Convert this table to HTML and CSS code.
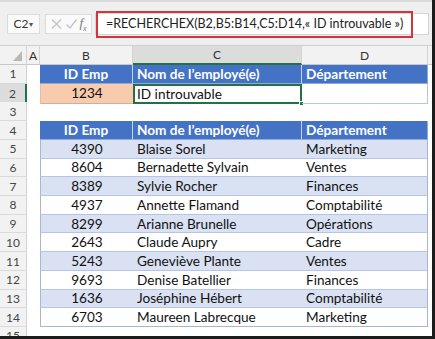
FILE: index.html
```html
<!DOCTYPE html>
<html lang="fr">
<head>
<meta charset="utf-8">
<link rel="stylesheet" href="styles.css">
</head>
<body>
<div class="frame">
  <div class="fbar">
    <div class="namebox"><span>C2</span><span class="caret">▾</span></div>
    <div class="sep">⋮</div>
    <div class="fxbox">
      <svg width="14" height="12" viewBox="0 0 14 12"><path d="M2 1.5 L11 10.5 M11 1.5 L2 10.5" stroke="#c4c4c4" stroke-width="1.4" fill="none"/></svg>
      <svg width="13" height="12" viewBox="0 0 13 12"><path d="M1.5 6.5 L5 10 L11.5 1.5" stroke="#c4c4c4" stroke-width="1.4" fill="none"/></svg>
      <span class="fx">f<sub>x</sub></span>
    </div>
    <div class="finput">
      <span class="ftext">=RECHERCHEX(B2,B5:B14,C5:D14,« ID introuvable »)</span>
      <div class="redbox"></div>
    </div>
  </div>
  <div class="sheet">
    <div class="row colhead">
      <div class="corner"><span class="tri"></span></div>
      <div class="ch">A</div>
      <div class="ch">B</div>
      <div class="ch ch-sel">C</div>
      <div class="ch">D</div>
      <div class="ch ch-last"></div>
    </div>

    <div class="row">
      <div class="rh">1</div><div class="c"></div>
      <div class="c hdr num">ID Emp</div>
      <div class="c hdr">Nom de l’employé(e)</div>
      <div class="c hdr hdr-end">Département</div><div class="c"></div>
    </div>
    <div class="row">
      <div class="rh rh-sel">2</div><div class="c"></div>
      <div class="c lookup num">1234</div>
      <div class="c selected">ID introuvable<span class="handle"></span></div>
      <div class="c result"></div><div class="c"></div>
    </div>
    <div class="row">
      <div class="rh">3</div><div class="c"></div><div class="c"></div><div class="c"></div><div class="c"></div><div class="c"></div>
    </div>
    <div class="row">
      <div class="rh">4</div><div class="c"></div>
      <div class="c hdr num">ID Emp</div>
      <div class="c hdr">Nom de l’employé(e)</div>
      <div class="c hdr hdr-end">Département</div><div class="c"></div>
    </div>
    <div class="row band">
      <div class="rh">5</div><div class="c"></div>
      <div class="c t tl num">4390</div><div class="c t">Blaise Sorel</div><div class="c t tr">Marketing</div><div class="c"></div>
    </div>
    <div class="row">
      <div class="rh">6</div><div class="c"></div>
      <div class="c t tl num">8604</div><div class="c t">Bernadette Sylvain</div><div class="c t tr">Ventes</div><div class="c"></div>
    </div>
    <div class="row band">
      <div class="rh">7</div><div class="c"></div>
      <div class="c t tl num">8389</div><div class="c t">Sylvie Rocher</div><div class="c t tr">Finances</div><div class="c"></div>
    </div>
    <div class="row">
      <div class="rh">8</div><div class="c"></div>
      <div class="c t tl num">4937</div><div class="c t">Annette Flamand</div><div class="c t tr">Comptabilité</div><div class="c"></div>
    </div>
    <div class="row band">
      <div class="rh">9</div><div class="c"></div>
      <div class="c t tl num">8299</div><div class="c t">Arianne Brunelle</div><div class="c t tr">Opérations</div><div class="c"></div>
    </div>
    <div class="row">
      <div class="rh">10</div><div class="c"></div>
      <div class="c t tl num">2643</div><div class="c t">Claude Aupry</div><div class="c t tr">Cadre</div><div class="c"></div>
    </div>
    <div class="row band">
      <div class="rh">11</div><div class="c"></div>
      <div class="c t tl num">5243</div><div class="c t">Geneviève Plante</div><div class="c t tr">Ventes</div><div class="c"></div>
    </div>
    <div class="row">
      <div class="rh">12</div><div class="c"></div>
      <div class="c t tl num">9693</div><div class="c t">Denise Batellier</div><div class="c t tr">Finances</div><div class="c"></div>
    </div>
    <div class="row band">
      <div class="rh">13</div><div class="c"></div>
      <div class="c t tl num">1636</div><div class="c t">Joséphine Hébert</div><div class="c t tr">Comptabilité</div><div class="c"></div>
    </div>
    <div class="row last">
      <div class="rh">14</div><div class="c"></div>
      <div class="c t tl num">6703</div><div class="c t">Maureen Labrecque</div><div class="c t tr">Marketing</div><div class="c"></div>
    </div>
    <div class="row partial">
      <div class="rh">15</div><div class="c"></div><div class="c"></div><div class="c"></div><div class="c"></div><div class="c"></div>
    </div>
  </div>
</div>
</body>
</html>
```

FILE: styles.css
```css
* { box-sizing: border-box; }
body { margin: 0; background: #fff; }
.frame {
  width: 435px; height: 339px;
  border-right: 3px solid #1c1c1c;
  border-bottom: 3px solid #1c1c1c;
  overflow: hidden;
  background: #fff;
  font-family: Lato, "Open Sans", sans-serif;
}
.fbar {
  height: 46px;
  background: #efefef;
  border-top: 2px solid #dadada;
  border-bottom: 1px solid #cfcfcf;
  display: flex;
  align-items: center;
  padding-left: 7px;
}
.namebox {
  width: 33px; height: 20px;
  background: #fafafa;
  border: 1px solid #dcdcdc;
  display: flex; align-items: center; justify-content: center; gap: 1px;
  font-size: 12px; color: #333;
}
.caret { font-size: 8px; color: #555; }
.sep { width: 5px; color: #b0b0b0; font-size: 11px; text-align: center; }
.fxbox {
  width: 47px; height: 20px;
  background: #fafafa;
  border: 1px solid #dcdcdc;
  display: flex; align-items: center; justify-content: center; gap: 1px;
  margin-right: 3px;
}
.fx { font-family: "Liberation Serif", serif; font-style: italic; font-size: 13px; color: #777; }
.fx sub { font-size: 8px; }
.finput {
  position: relative;
  width: 334px; height: 22px;
  background: #fff;
  border: 1px solid #d6d6d6;
  display: flex; align-items: center;
  padding-left: 10px;
}
.ftext { font-size: 12.5px; color: #222; white-space: nowrap; }
.redbox {
  position: absolute;
  left: 0; top: -3px;
  width: 317px; height: 27px;
  border: 2px solid #d7333d;
}
.sheet { font-size: 13.6px; }
.row {
  display: grid;
  grid-template-columns: 27px 13px 93px 169px 126px 4px;
  height: 18.72px;
}
.colhead { height: 19px; background: #f2f2f2; }
.corner {
  position: relative;
  border-right: 1px solid #d4d4d4;
  border-bottom: 1px solid #c8c8c8;
}
.tri {
  position: absolute; right: 4px; bottom: 3px;
  width: 0; height: 0;
  border-left: 9px solid transparent;
  border-bottom: 10px solid #b9b9b9;
}
.ch {
  border-right: 1px solid #d4d4d4;
  border-bottom: 1px solid #c8c8c8;
  display: flex; align-items: center; justify-content: center;
  font-size: 12px; color: #333;
}
.ch-sel { background: #dcdcdc; border-bottom: 2px solid #217346; }
.ch-last { border-right: none; }
.rh {
  background: #f2f2f2;
  border-right: 1px solid #d2d2d2;
  border-bottom: 1px solid #dadada;
  display: flex; align-items: center; justify-content: center;
  font-size: 12px; color: #444;
}
.rh-sel { background: #dcdcdc; border-right: 2px solid #217346; }
.c {
  display: flex; align-items: center;
  padding-left: 4px;
  color: #111;
  white-space: nowrap;
  position: relative;
}
.num { justify-content: center; padding-left: 0; }
.hdr {
  background: #4472c4; color: #fff; font-weight: bold;
  border-right: 1px solid #c5d3ee;
  border-bottom: 1px solid #8ea9db;
}
.hdr-end { border-right: 1px solid #8ea9db; }
.lookup {
  background: #f8cbad;
  border-left: 1px solid #d9c0b0;
  border-bottom: 1px solid #c9b2a4;
}
.selected {
  border: 2px solid #217346;
  padding-left: 2px;
}
.handle {
  position: absolute; right: -4px; bottom: -4px;
  width: 5px; height: 5px;
  background: #217346; border: 1px solid #fff;
}
.result {
  border-right: 1px solid #b4c6e7;
  border-bottom: 1px solid #b4c6e7;
}
.t { border-bottom: 1px solid #b4c6e7; }
.tl { border-left: 1px solid #a9b6cc; }
.tr { border-right: 1px solid #a9b6cc; }
.band .t { background: #d9e1f2; }
.last .t { border-bottom: 1px solid #a9b6cc; }
.partial { height: 9px; }
.partial .rh { align-items: flex-start; padding-top: 1px; }
```
